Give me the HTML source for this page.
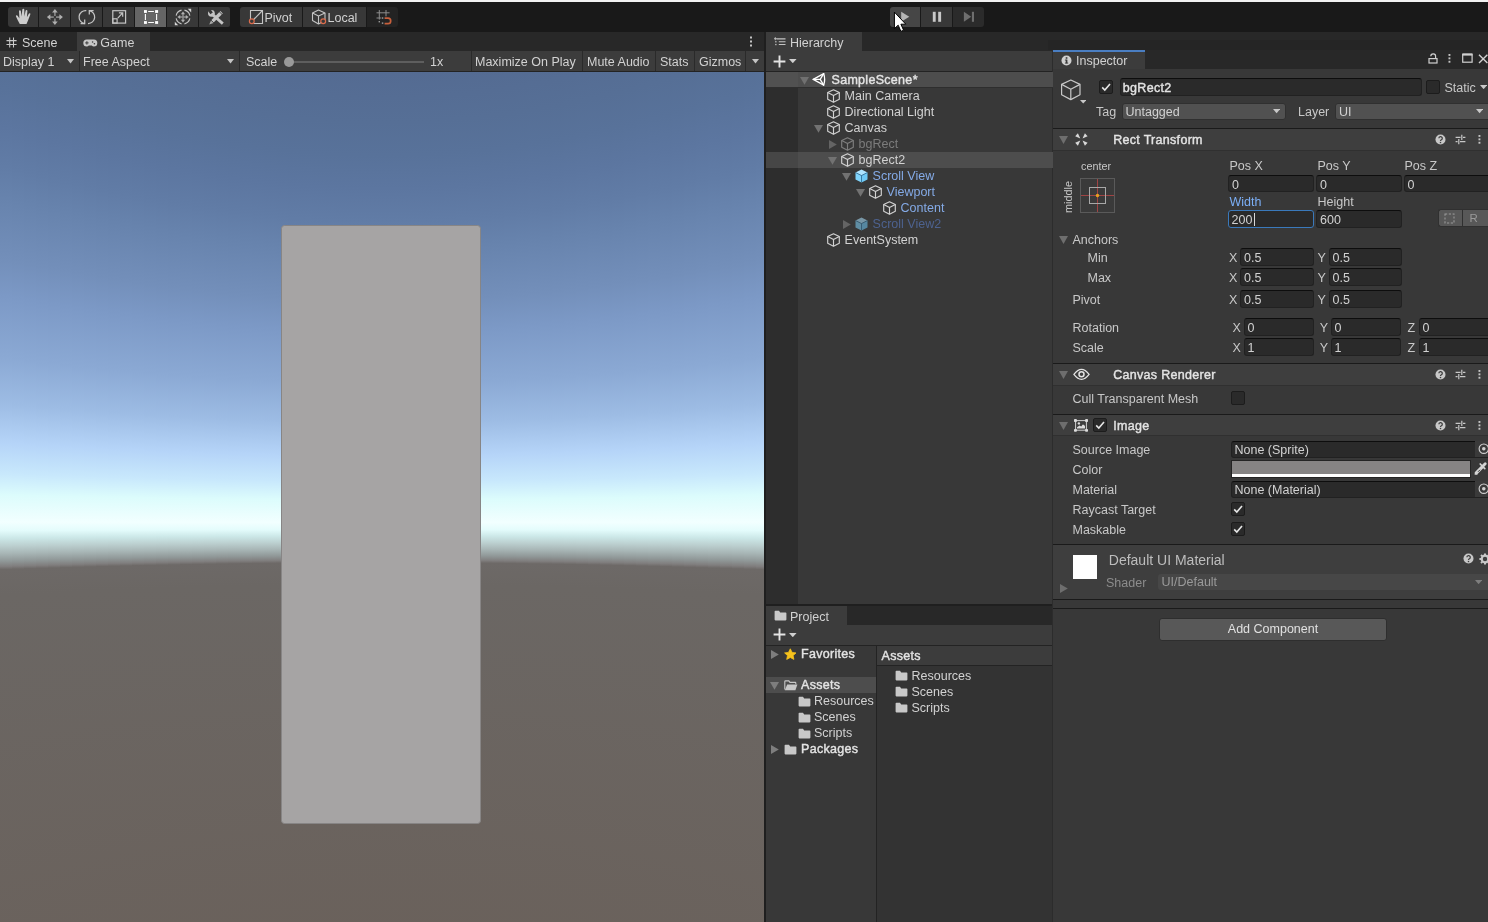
<!DOCTYPE html><html><head><meta charset="utf-8"><title>Unity</title><style>
html,body{margin:0;padding:0;}
body{width:1488px;height:922px;overflow:hidden;background:#383838;position:relative;font-family:"Liberation Sans",sans-serif;font-size:12px;color:#d2d2d2;}
div,svg{position:absolute;box-sizing:border-box;}
.t{white-space:nowrap;will-change:opacity;}
</style></head><body><div style="left:0px;top:0px;width:1488px;height:2px;background:#f2f2f2;"></div>
<div style="left:0px;top:2px;width:1488px;height:30px;background:#191919;"></div>
<div style="left:0px;top:32px;width:1488px;height:19px;background:#282828;"></div>
<div style="left:77px;top:32px;width:73px;height:19px;background:#3c3c3c;"></div>
<div style="left:0px;top:51px;width:764px;height:21px;background:#3c3c3c;border-bottom:1px solid #232323;"></div>
<svg style="left:0;top:72px" width="764" height="850" viewBox="0 0 764 850" shape-rendering="crispEdges"><defs><linearGradient id="gb" gradientUnits="userSpaceOnUse" x1="0" x2="0" y1="-147.5" y2="1052.5"><stop offset="0.0333" stop-color="#52688e"/><stop offset="0.1233" stop-color="#546b92"/><stop offset="0.1650" stop-color="#566f96"/><stop offset="0.1925" stop-color="#58729a"/><stop offset="0.2200" stop-color="#5c76a0"/><stop offset="0.2475" stop-color="#617ca6"/><stop offset="0.2700" stop-color="#6783ad"/><stop offset="0.3133" stop-color="#738fba"/><stop offset="0.3392" stop-color="#7c99c6"/><stop offset="0.3825" stop-color="#8ba9d4"/><stop offset="0.4150" stop-color="#9dbce4"/><stop offset="0.4425" stop-color="#b5d4f8"/><stop offset="0.4642" stop-color="#c8e8fc"/><stop offset="0.4792" stop-color="#dcfcfc"/><stop offset="0.4983" stop-color="#f2ffff"/><stop offset="0.5042" stop-color="#e4fcfc"/><stop offset="0.5096" stop-color="#cce8e8"/><stop offset="0.5150" stop-color="#bcd0d0"/><stop offset="0.5204" stop-color="#a8b6b6"/><stop offset="0.5258" stop-color="#909898"/><stop offset="0.5296" stop-color="#807e7e"/><stop offset="0.5317" stop-color="#6d6967"/><stop offset="0.5500" stop-color="#6b6764"/><stop offset="0.8500" stop-color="#6a615b"/></linearGradient></defs><rect x="0" y="-300" width="13" height="1450" fill="url(#gb)" transform="matrix(1 0 0 1.1801 0 -81.510)"/><rect x="12" y="-300" width="13" height="1450" fill="url(#gb)" transform="matrix(1 0 0 1.1696 0 -76.760)"/><rect x="24" y="-300" width="13" height="1450" fill="url(#gb)" transform="matrix(1 0 0 1.1594 0 -72.123)"/><rect x="36" y="-300" width="13" height="1450" fill="url(#gb)" transform="matrix(1 0 0 1.1494 0 -67.602)"/><rect x="48" y="-300" width="13" height="1450" fill="url(#gb)" transform="matrix(1 0 0 1.1397 0 -63.200)"/><rect x="60" y="-300" width="13" height="1450" fill="url(#gb)" transform="matrix(1 0 0 1.1302 0 -58.921)"/><rect x="72" y="-300" width="13" height="1450" fill="url(#gb)" transform="matrix(1 0 0 1.1210 0 -54.767)"/><rect x="84" y="-300" width="13" height="1450" fill="url(#gb)" transform="matrix(1 0 0 1.1121 0 -50.741)"/><rect x="96" y="-300" width="13" height="1450" fill="url(#gb)" transform="matrix(1 0 0 1.1035 0 -46.847)"/><rect x="108" y="-300" width="13" height="1450" fill="url(#gb)" transform="matrix(1 0 0 1.0952 0 -43.088)"/><rect x="120" y="-300" width="13" height="1450" fill="url(#gb)" transform="matrix(1 0 0 1.0872 0 -39.466)"/><rect x="132" y="-300" width="13" height="1450" fill="url(#gb)" transform="matrix(1 0 0 1.0795 0 -35.986)"/><rect x="144" y="-300" width="13" height="1450" fill="url(#gb)" transform="matrix(1 0 0 1.0722 0 -32.649)"/><rect x="156" y="-300" width="13" height="1450" fill="url(#gb)" transform="matrix(1 0 0 1.0651 0 -29.459)"/><rect x="168" y="-300" width="13" height="1450" fill="url(#gb)" transform="matrix(1 0 0 1.0584 0 -26.419)"/><rect x="180" y="-300" width="13" height="1450" fill="url(#gb)" transform="matrix(1 0 0 1.0520 0 -23.532)"/><rect x="192" y="-300" width="13" height="1450" fill="url(#gb)" transform="matrix(1 0 0 1.0460 0 -20.800)"/><rect x="204" y="-300" width="13" height="1450" fill="url(#gb)" transform="matrix(1 0 0 1.0403 0 -18.226)"/><rect x="216" y="-300" width="13" height="1450" fill="url(#gb)" transform="matrix(1 0 0 1.0349 0 -15.813)"/><rect x="228" y="-300" width="13" height="1450" fill="url(#gb)" transform="matrix(1 0 0 1.0300 0 -13.563)"/><rect x="240" y="-300" width="13" height="1450" fill="url(#gb)" transform="matrix(1 0 0 1.0254 0 -11.479)"/><rect x="252" y="-300" width="13" height="1450" fill="url(#gb)" transform="matrix(1 0 0 1.0211 0 -9.562)"/><rect x="264" y="-300" width="13" height="1450" fill="url(#gb)" transform="matrix(1 0 0 1.0173 0 -7.816)"/><rect x="276" y="-300" width="13" height="1450" fill="url(#gb)" transform="matrix(1 0 0 1.0138 0 -6.242)"/><rect x="288" y="-300" width="13" height="1450" fill="url(#gb)" transform="matrix(1 0 0 1.0107 0 -4.841)"/><rect x="300" y="-300" width="13" height="1450" fill="url(#gb)" transform="matrix(1 0 0 1.0080 0 -3.616)"/><rect x="312" y="-300" width="13" height="1450" fill="url(#gb)" transform="matrix(1 0 0 1.0057 0 -2.567)"/><rect x="324" y="-300" width="13" height="1450" fill="url(#gb)" transform="matrix(1 0 0 1.0037 0 -1.696)"/><rect x="336" y="-300" width="13" height="1450" fill="url(#gb)" transform="matrix(1 0 0 1.0022 0 -1.004)"/><rect x="348" y="-300" width="13" height="1450" fill="url(#gb)" transform="matrix(1 0 0 1.0011 0 -0.492)"/><rect x="360" y="-300" width="13" height="1450" fill="url(#gb)" transform="matrix(1 0 0 1.0004 0 -0.161)"/><rect x="372" y="-300" width="13" height="1450" fill="url(#gb)" transform="matrix(1 0 0 1.0000 0 -0.010)"/><rect x="384" y="-300" width="13" height="1450" fill="url(#gb)" transform="matrix(1 0 0 1.0001 0 -0.040)"/><rect x="396" y="-300" width="13" height="1450" fill="url(#gb)" transform="matrix(1 0 0 1.0006 0 -0.251)"/><rect x="408" y="-300" width="13" height="1450" fill="url(#gb)" transform="matrix(1 0 0 1.0014 0 -0.643)"/><rect x="420" y="-300" width="13" height="1450" fill="url(#gb)" transform="matrix(1 0 0 1.0027 0 -1.215)"/><rect x="432" y="-300" width="13" height="1450" fill="url(#gb)" transform="matrix(1 0 0 1.0043 0 -1.967)"/><rect x="444" y="-300" width="13" height="1450" fill="url(#gb)" transform="matrix(1 0 0 1.0064 0 -2.897)"/><rect x="456" y="-300" width="13" height="1450" fill="url(#gb)" transform="matrix(1 0 0 1.0088 0 -4.005)"/><rect x="468" y="-300" width="13" height="1450" fill="url(#gb)" transform="matrix(1 0 0 1.0117 0 -5.288)"/><rect x="480" y="-300" width="13" height="1450" fill="url(#gb)" transform="matrix(1 0 0 1.0149 0 -6.747)"/><rect x="492" y="-300" width="13" height="1450" fill="url(#gb)" transform="matrix(1 0 0 1.0185 0 -8.379)"/><rect x="504" y="-300" width="13" height="1450" fill="url(#gb)" transform="matrix(1 0 0 1.0225 0 -10.182)"/><rect x="516" y="-300" width="13" height="1450" fill="url(#gb)" transform="matrix(1 0 0 1.0269 0 -12.155)"/><rect x="528" y="-300" width="13" height="1450" fill="url(#gb)" transform="matrix(1 0 0 1.0316 0 -14.294)"/><rect x="540" y="-300" width="13" height="1450" fill="url(#gb)" transform="matrix(1 0 0 1.0367 0 -16.599)"/><rect x="552" y="-300" width="13" height="1450" fill="url(#gb)" transform="matrix(1 0 0 1.0421 0 -19.066)"/><rect x="564" y="-300" width="13" height="1450" fill="url(#gb)" transform="matrix(1 0 0 1.0479 0 -21.693)"/><rect x="576" y="-300" width="13" height="1450" fill="url(#gb)" transform="matrix(1 0 0 1.0541 0 -24.477)"/><rect x="588" y="-300" width="13" height="1450" fill="url(#gb)" transform="matrix(1 0 0 1.0606 0 -27.416)"/><rect x="600" y="-300" width="13" height="1450" fill="url(#gb)" transform="matrix(1 0 0 1.0674 0 -30.506)"/><rect x="612" y="-300" width="13" height="1450" fill="url(#gb)" transform="matrix(1 0 0 1.0746 0 -33.745)"/><rect x="624" y="-300" width="13" height="1450" fill="url(#gb)" transform="matrix(1 0 0 1.0821 0 -37.130)"/><rect x="636" y="-300" width="13" height="1450" fill="url(#gb)" transform="matrix(1 0 0 1.0899 0 -40.658)"/><rect x="648" y="-300" width="13" height="1450" fill="url(#gb)" transform="matrix(1 0 0 1.0980 0 -44.326)"/><rect x="660" y="-300" width="13" height="1450" fill="url(#gb)" transform="matrix(1 0 0 1.1064 0 -48.130)"/><rect x="672" y="-300" width="13" height="1450" fill="url(#gb)" transform="matrix(1 0 0 1.1151 0 -52.068)"/><rect x="684" y="-300" width="13" height="1450" fill="url(#gb)" transform="matrix(1 0 0 1.1241 0 -56.137)"/><rect x="696" y="-300" width="13" height="1450" fill="url(#gb)" transform="matrix(1 0 0 1.1333 0 -60.333)"/><rect x="708" y="-300" width="13" height="1450" fill="url(#gb)" transform="matrix(1 0 0 1.1429 0 -64.654)"/><rect x="720" y="-300" width="13" height="1450" fill="url(#gb)" transform="matrix(1 0 0 1.1527 0 -69.096)"/><rect x="732" y="-300" width="13" height="1450" fill="url(#gb)" transform="matrix(1 0 0 1.1628 0 -73.655)"/><rect x="744" y="-300" width="13" height="1450" fill="url(#gb)" transform="matrix(1 0 0 1.1731 0 -78.330)"/><rect x="756" y="-300" width="13" height="1450" fill="url(#gb)" transform="matrix(1 0 0 1.1837 0 -83.118)"/><rect x="281.5" y="153.5" width="199" height="598" rx="3" ry="3" fill="#a6a4a4" stroke="#878585" stroke-width="1" shape-rendering="auto"/></svg>
<div style="left:764px;top:32px;width:2px;height:890px;background:#1f1f1f;"></div>
<div style="left:766px;top:32px;width:96px;height:19px;background:#3c3c3c;"></div>
<div style="left:766px;top:51px;width:287px;height:21px;background:#3c3c3c;border-bottom:1px solid #232323;"></div>
<div style="left:766px;top:72px;width:32px;height:532px;background:#2d2d2d;"></div>
<div style="left:798px;top:72px;width:255px;height:532px;background:#383838;"></div>
<div style="left:766px;top:604px;width:287px;height:2px;background:#1f1f1f;"></div>
<div style="left:766px;top:606px;width:287px;height:18.5px;background:#282828;"></div>
<div style="left:766px;top:606px;width:81px;height:18.5px;background:#3c3c3c;"></div>
<div style="left:766px;top:624.5px;width:287px;height:21.5px;background:#3c3c3c;border-bottom:1px solid #232323;"></div>
<div style="left:766px;top:646px;width:110px;height:276px;background:#383838;"></div>
<div style="left:876px;top:646px;width:1px;height:276px;background:#232323;"></div>
<div style="left:877px;top:646px;width:176px;height:20px;background:#3c3c3c;border-bottom:1px solid #232323;"></div>
<div style="left:877px;top:666px;width:176px;height:256px;background:#333333;"></div>
<div style="left:1048px;top:40px;width:440px;height:10px;background:#252525;"></div>
<div style="left:1052px;top:50px;width:1px;height:872px;background:#2c2c2c;"></div>
<div style="left:1053px;top:50px;width:435px;height:19px;background:#282828;"></div>
<div style="left:1053px;top:50px;width:92px;height:19px;background:#3c3c3c;border-top:2px solid #4a7ec2;"></div>
<div style="left:1053px;top:69px;width:435px;height:853px;background:#383838;"></div>
<div style="left:8px;top:7px;width:30px;height:20px;background:#383838;border-radius:3px 0 0 3px;"></div>
<div style="left:39px;top:7px;width:31px;height:20px;background:#383838;"></div>
<div style="left:71px;top:7px;width:31px;height:20px;background:#383838;"></div>
<div style="left:103px;top:7px;width:31px;height:20px;background:#383838;"></div>
<div style="left:135px;top:7px;width:31px;height:20px;background:#656565;"></div>
<div style="left:167px;top:7px;width:31px;height:20px;background:#383838;"></div>
<div style="left:199px;top:7px;width:31px;height:20px;background:#383838;border-radius:0 2px 2px 0;"></div>
<svg style="left:8px;top:7px;" width="30" height="20" viewBox="0 0 30 20"><path d="M11.8 17L9.9 13.5L8 9.6Q7.6 8.4 8.5 8.2Q9.3 8.1 9.8 9L11.4 11.6L11 4.2Q11 3.2 11.9 3.2Q12.8 3.2 12.9 4.2L13.6 9.5L14.3 2.8Q14.4 1.8 15.4 1.8Q16.3 1.8 16.3 2.8L16.4 9.5L17.6 3.8Q17.8 2.9 18.7 3Q19.6 3.2 19.4 4.2L18.9 10.2L20.8 6.8Q21.3 6 22 6.3Q22.6 6.7 22.3 7.6L20 13.5L18.5 17Z" fill="#cdcdcd"/></svg>
<svg style="left:39px;top:7px;" width="31" height="20" viewBox="0 0 31 20"><g fill="none" stroke="#858585" stroke-width="1.7"><path d="M15.9 5V9M15.9 11.4V15.2M10.8 10.1H14.8M17 10.1H21"/></g><g fill="#b0b0b0"><path d="M15.9 2L18.7 5.6H13.1Z"/><path d="M15.9 18L18.7 14.6H13.1Z"/><path d="M7.9 10.1L11.4 7.3V12.9Z"/><path d="M23.9 10.1L20.4 7.3V12.9Z"/></g></svg>
<svg style="left:71px;top:7px;" width="31" height="20" viewBox="0 0 31 20"><g fill="none" stroke="#c4c4c4" stroke-width="1.25"><path d="M13.7 16.6A6.5 6.5 0 0 1 15.3 3.7"/><path d="M18.3 3.6A6.5 6.5 0 0 1 17 16.5"/><path d="M9.6 16.6H13.7V12.6"/><path d="M22.6 3.6H18.3V7.6"/></g></svg>
<svg style="left:103px;top:7px;" width="31" height="20" viewBox="0 0 31 20"><g fill="none" stroke="#c4c4c4" stroke-width="1.2"><rect x="9.8" y="3.7" width="12.8" height="12.4"/><rect x="9.8" y="11.8" width="4.3" height="4.3"/><path d="M14.8 11.2L19.4 6.2M15.9 5.9H19.7V9.8"/></g></svg>
<svg style="left:135px;top:7px;" width="31" height="20" viewBox="0 0 31 20"><g fill="none" stroke="#ffffff" stroke-width="1.1"><path d="M13.2 4.5H18.9M13.2 15.5H18.9M10.4 6.9V13M21.6 6.9V13"/></g><g fill="#ffffff"><rect x="9" y="3.1" width="2.9" height="2.8"/><rect x="20.1" y="3.1" width="3" height="2.8"/><rect x="9" y="14.1" width="2.9" height="2.8"/><rect x="20.1" y="14.1" width="3" height="2.8"/></g></svg>
<svg style="left:167px;top:7px;" width="31" height="20" viewBox="0 0 31 20"><g fill="none" stroke="#c4c4c4" stroke-width="1.15"><path d="M22.85 11.46A7 7 0 0 1 17.46 16.85"/><path d="M14.54 16.85A7 7 0 0 1 9.15 11.46"/><path d="M9.15 8.54A7 7 0 0 1 14.54 3.15"/><path d="M17.46 3.15A7 7 0 0 1 22.85 8.54"/></g><g stroke="#8e8e8e" stroke-width="1.5" fill="none"><path d="M16 6.6V13.4M12.6 10H19.4"/></g><g fill="#b0b0b0"><path d="M16 4.4L18.1 7.2H13.9Z"/><path d="M16 15.6L18.1 12.8H13.9Z"/><path d="M10.4 10L13.2 7.9V12.1Z"/><path d="M21.6 10L18.8 7.9V12.1Z"/></g><g fill="#d8d8d8"><path d="M24.2 1.8V5.4L20.8 1.8Z"/><path d="M7.8 18.2V14.8L11.2 18.2Z"/></g></svg>
<svg style="left:199px;top:7px;" width="31" height="20" viewBox="0 0 31 20"><path d="M13.6 7.6L23.8 16.6" stroke="#c4c4c4" stroke-width="2.8" fill="none"/><circle cx="12.4" cy="6.3" r="3.4" fill="#c4c4c4"/><path d="M12.6 6.4L9.6 2.2" stroke="#383838" stroke-width="3"/><path d="M22.6 5.2L13.4 14.4" stroke="#c4c4c4" stroke-width="3.4" fill="none"/><path d="M19.6 4L23.8 8.2" stroke="#383838" stroke-width="0.9"/><path d="M11.6 12.6L15.2 16.2" stroke="#383838" stroke-width="0.8"/><path d="M12 13.4L10.2 17.6L14.6 16Z" fill="#a8a8a8"/></svg>
<div style="left:240px;top:7px;width:62px;height:20px;background:#383838;border-radius:3px 0 0 3px;"></div>
<div style="left:303px;top:7px;width:63px;height:20px;background:#383838;"></div>
<div style="left:367px;top:7px;width:31px;height:20px;background:#232323;border-radius:0 3px 3px 0;"></div>
<svg style="left:240px;top:7px;" width="62" height="20" viewBox="0 0 62 20"><g fill="none" stroke="#c4c4c4" stroke-width="1.1"><path d="M10.5 12V3.5H22.5V16.5H13.5"/><path d="M13.2 13L22 4"/></g><circle cx="11.8" cy="14.2" r="2.4" fill="#383838" stroke="#dc6c4c" stroke-width="1.2"/></svg>
<div class="t" style="left:264.5px;top:10px;height:16px;line-height:16px;font-size:12.5px;color:#d2d2d2;font-weight:normal;">Pivot</div>
<svg style="left:303px;top:7px;" width="63" height="20" viewBox="0 0 63 20"><g fill="none" stroke="#c4c4c4" stroke-width="1.1" stroke-linejoin="round"><path d="M15.5 3L22 6V13.5L15.5 17L9.5 13.5V6Z"/><path d="M9.5 6L15.5 9L22 6M15.5 9V17"/></g><circle cx="20.2" cy="14.2" r="2.4" fill="#383838" stroke="#dc6c4c" stroke-width="1.2"/></svg>
<div class="t" style="left:327.5px;top:10px;height:16px;line-height:16px;font-size:12.5px;color:#d2d2d2;font-weight:normal;">Local</div>
<svg style="left:367px;top:7px;" width="31" height="20" viewBox="0 0 31 20"><g fill="none" stroke="#8c8c8c" stroke-width="1"><path d="M12.3 3V12.6M19 3V9.4M9.5 5.8H22.6M9.5 11H14.2"/></g><g fill="#9a9a9a"><rect x="11.6" y="14" width="1.4" height="1.4"/><rect x="14.8" y="10.3" width="1.5" height="1.5"/><rect x="14.8" y="15.4" width="1.5" height="1.5"/></g><path d="M17.6 11.2H21A2.7 2.7 0 0 1 21 16.6H17.6" fill="none" stroke="#c8603c" stroke-width="1.7"/></svg>
<div style="left:890px;top:7px;width:30px;height:20px;background:#464646;border-radius:3px 0 0 3px;"></div>
<div style="left:921px;top:7px;width:31px;height:20px;background:#383838;"></div>
<div style="left:953px;top:7px;width:31px;height:20px;background:#2b2b2b;border-radius:0 3px 3px 0;"></div>
<svg style="left:890px;top:7px;" width="30" height="20" viewBox="0 0 30 20"><path d="M11.2 4.7L19.3 9.8L11.2 14.8Z" fill="#b4b4b4"/></svg>
<svg style="left:921px;top:7px;" width="31" height="20" viewBox="0 0 31 20"><rect x="11.8" y="4.8" width="2.9" height="10" fill="#c8c8c8"/><rect x="17.2" y="4.8" width="2.9" height="10" fill="#c8c8c8"/></svg>
<svg style="left:953px;top:7px;" width="31" height="20" viewBox="0 0 31 20"><path d="M10.9 4.8L18.2 9.8L10.9 14.8Z" fill="#6e6e6e"/><rect x="18.9" y="4.8" width="2.1" height="10" fill="#6e6e6e"/></svg>
<svg style="left:6px;top:37px;" width="11" height="11" viewBox="0 0 11 11"><g stroke="#c8c8c8" stroke-width="1.05" fill="none"><path d="M3.7 0.5V10.5M7.5 0.5V10.5M0.5 3.6H10.6M0.5 7.4H10.6"/></g></svg>
<div class="t" style="left:22px;top:35px;height:16px;line-height:16px;font-size:12.5px;color:#d2d2d2;font-weight:normal;">Scene</div>
<svg style="left:83px;top:39px;" width="15" height="8" viewBox="0 0 15 8"><path d="M3.8 0.4H10.8A3.5 3.5 0 0 1 10.8 7.4Q9.6 7.4 8.8 6.4H5.8Q5 7.4 3.8 7.4A3.5 3.5 0 0 1 3.8 0.4Z" fill="#c8c8c8"/><path d="M3.9 2.2V5.6M2.2 3.9H5.6" stroke="#3c3c3c" stroke-width="1"/><circle cx="9.6" cy="3" r="0.8" fill="#3c3c3c"/><circle cx="11.4" cy="4.8" r="0.8" fill="#3c3c3c"/></svg>
<div class="t" style="left:100.3px;top:35px;height:16px;line-height:16px;font-size:12.5px;color:#d2d2d2;font-weight:normal;">Game</div>
<svg style="left:748px;top:36px;" width="6" height="12" viewBox="0 0 6 12"><g fill="#c4c4c4"><rect x="2" y="0.5" width="2" height="2"/><rect x="2" y="4.5" width="2" height="2"/><rect x="2" y="8.5" width="2" height="2"/></g></svg>
<div class="t" style="left:3px;top:54px;height:16px;line-height:16px;font-size:12.5px;color:#d2d2d2;font-weight:normal;">Display 1</div>
<svg style="left:67.0px;top:59.25px;" width="7" height="4.5" viewBox="0 0 7 4.5"><path d="M0 0H7L3.5 4.5Z" fill="#c4c4c4"/></svg>
<div style="left:79px;top:51px;width:1px;height:20px;background:#2a2a2a;"></div>
<div class="t" style="left:83px;top:54px;height:16px;line-height:16px;font-size:12.5px;color:#d2d2d2;font-weight:normal;">Free Aspect</div>
<svg style="left:227.0px;top:59.25px;" width="7" height="4.5" viewBox="0 0 7 4.5"><path d="M0 0H7L3.5 4.5Z" fill="#c4c4c4"/></svg>
<div style="left:239px;top:51px;width:1px;height:20px;background:#2a2a2a;"></div>
<div class="t" style="left:246px;top:54px;height:16px;line-height:16px;font-size:12.5px;color:#d2d2d2;font-weight:normal;">Scale</div>
<div style="left:289px;top:61px;width:135px;height:2px;background:#5e5e5e;"></div>
<div style="left:284px;top:57px;width:10px;height:10px;background:#999999;border-radius:5px;"></div>
<div class="t" style="left:430px;top:54px;height:16px;line-height:16px;font-size:12.5px;color:#d2d2d2;font-weight:normal;">1x</div>
<div style="left:471px;top:51px;width:1px;height:20px;background:#2a2a2a;"></div>
<div class="t" style="left:475px;top:54px;height:16px;line-height:16px;font-size:12.5px;color:#d2d2d2;font-weight:normal;">Maximize On Play</div>
<div style="left:582px;top:51px;width:1px;height:20px;background:#2a2a2a;"></div>
<div class="t" style="left:587px;top:54px;height:16px;line-height:16px;font-size:12.5px;color:#d2d2d2;font-weight:normal;">Mute Audio</div>
<div style="left:655px;top:51px;width:1px;height:20px;background:#2a2a2a;"></div>
<div class="t" style="left:660px;top:54px;height:16px;line-height:16px;font-size:12.5px;color:#d2d2d2;font-weight:normal;">Stats</div>
<div style="left:694px;top:51px;width:1px;height:20px;background:#2a2a2a;"></div>
<div class="t" style="left:699px;top:54px;height:16px;line-height:16px;font-size:12.5px;color:#d2d2d2;font-weight:normal;">Gizmos</div>
<div style="left:745px;top:51px;width:1px;height:20px;background:#2a2a2a;"></div>
<svg style="left:751.5px;top:59.25px;" width="7" height="4.5" viewBox="0 0 7 4.5"><path d="M0 0H7L3.5 4.5Z" fill="#c4c4c4"/></svg>
<svg style="left:774px;top:36px;" width="13" height="12" viewBox="0 0 13 12"><g stroke="#c4c4c4" stroke-width="1.1" fill="none"><path d="M2.5 2.9H11.5M4.8 5.7H11.5M4.8 8.5H11.5"/><path d="M1.3 1.2V4.2M0 2.7H2.8" stroke-width="0.9"/></g><g fill="#c4c4c4"><rect x="1.2" y="5.1" width="1.3" height="1.3"/><rect x="1.2" y="7.9" width="1.3" height="1.3"/></g></svg>
<div class="t" style="left:790px;top:35px;height:16px;line-height:16px;font-size:12.5px;color:#d2d2d2;font-weight:normal;">Hierarchy</div>
<svg style="left:772.5px;top:54.5px;" width="13" height="13" viewBox="0 0 13 13"><path d="M6.5 0.6V12.4M0.6 6.5H12.4" stroke="#e4e4e4" stroke-width="1.9" fill="none"/></svg>
<svg style="left:789.0px;top:58.9px;" width="7.6" height="4.2" viewBox="0 0 7.6 4.2"><path d="M0 0H7.6L3.8 4.2Z" fill="#d0d0d0"/></svg>
<div style="left:766px;top:72px;width:32px;height:15px;background:#515151;"></div>
<div style="left:798px;top:72px;width:255px;height:15px;background:#4d4d4d;"></div>
<div style="left:766px;top:87px;width:287px;height:1px;background:#2e2e2e;"></div>
<div style="left:766px;top:152px;width:32px;height:16px;background:#464646;"></div>
<div style="left:798px;top:152px;width:255px;height:16px;background:#4d4d4d;"></div>
<svg style="left:799.9px;top:77.0px;" width="9" height="8" viewBox="0 0 9 8"><path d="M0 0H9L4.5 7.8Z" fill="#707070"/></svg>
<svg style="left:812px;top:72px;" width="14" height="15" viewBox="0 0 14 15"><g fill="none" stroke="#ffffff" stroke-width="1.3" stroke-linejoin="round" stroke-linecap="round"><path d="M1.2 7.4L11.7 1.6Q13.6 7.4 11.7 13.1Z"/><path d="M1.2 7.4H8.2M8.2 7.4L11.7 1.6M8.2 7.4L11.7 13.1"/></g></svg>
<div class="t" style="left:831.5px;top:72px;height:16px;line-height:16px;font-size:12.5px;color:#e4e4e4;font-weight:normal;-webkit-text-stroke:0.4px #e4e4e4;letter-spacing:0.3px;">SampleScene*</div>
<svg style="left:827px;top:89px;" width="13" height="14" viewBox="0 0 13 14"><g fill="none" stroke="#d2d2d2" stroke-width="1.15" stroke-linejoin="round" opacity="1"><path d="M6.5 0.8L12.3 3.6V10.3L6.5 13.2L0.7 10.3V3.6Z"/><path d="M0.7 3.6L6.5 6.6L12.3 3.6M6.5 6.6V13.2"/></g></svg>
<div class="t" style="left:844.6px;top:88px;height:16px;line-height:16px;font-size:12.5px;color:#d2d2d2;font-weight:normal;">Main Camera</div>
<svg style="left:827px;top:105px;" width="13" height="14" viewBox="0 0 13 14"><g fill="none" stroke="#d2d2d2" stroke-width="1.15" stroke-linejoin="round" opacity="1"><path d="M6.5 0.8L12.3 3.6V10.3L6.5 13.2L0.7 10.3V3.6Z"/><path d="M0.7 3.6L6.5 6.6L12.3 3.6M6.5 6.6V13.2"/></g></svg>
<div class="t" style="left:844.6px;top:104px;height:16px;line-height:16px;font-size:12.5px;color:#d2d2d2;font-weight:normal;">Directional Light</div>
<svg style="left:827px;top:121px;" width="13" height="14" viewBox="0 0 13 14"><g fill="none" stroke="#d2d2d2" stroke-width="1.15" stroke-linejoin="round" opacity="1"><path d="M6.5 0.8L12.3 3.6V10.3L6.5 13.2L0.7 10.3V3.6Z"/><path d="M0.7 3.6L6.5 6.6L12.3 3.6M6.5 6.6V13.2"/></g></svg>
<div class="t" style="left:844.6px;top:120px;height:16px;line-height:16px;font-size:12.5px;color:#d2d2d2;font-weight:normal;">Canvas</div>
<svg style="left:814.3px;top:124.5px;" width="9" height="8" viewBox="0 0 9 8"><path d="M0 0H9L4.5 7.8Z" fill="#727272"/></svg>
<svg style="left:841px;top:137px;" width="13" height="14" viewBox="0 0 13 14"><g fill="none" stroke="#d2d2d2" stroke-width="1.15" stroke-linejoin="round" opacity="0.45"><path d="M6.5 0.8L12.3 3.6V10.3L6.5 13.2L0.7 10.3V3.6Z"/><path d="M0.7 3.6L6.5 6.6L12.3 3.6M6.5 6.6V13.2"/></g></svg>
<div class="t" style="left:858.6px;top:136px;height:16px;line-height:16px;font-size:12.5px;color:#7c7c7c;font-weight:normal;">bgRect</div>
<svg style="left:828.8px;top:139.9px;" width="8" height="9" viewBox="0 0 8 9"><path d="M0 0V9L7.8 4.5Z" fill="#646464"/></svg>
<svg style="left:841px;top:153px;" width="13" height="14" viewBox="0 0 13 14"><g fill="none" stroke="#d2d2d2" stroke-width="1.15" stroke-linejoin="round" opacity="1"><path d="M6.5 0.8L12.3 3.6V10.3L6.5 13.2L0.7 10.3V3.6Z"/><path d="M0.7 3.6L6.5 6.6L12.3 3.6M6.5 6.6V13.2"/></g></svg>
<div class="t" style="left:858.6px;top:152px;height:16px;line-height:16px;font-size:12.5px;color:#d2d2d2;font-weight:normal;">bgRect2</div>
<svg style="left:828.3px;top:156.5px;" width="9" height="8" viewBox="0 0 9 8"><path d="M0 0H9L4.5 7.8Z" fill="#727272"/></svg>
<svg style="left:855px;top:169px;" width="13" height="14" viewBox="0 0 13 14"><g opacity="1"><path d="M6.5 0.6L12.5 3.5L6.5 6.6L0.5 3.5Z" fill="#aee4ff"/><path d="M0.5 3.5L6.5 6.6V13.4L0.5 10.4Z" fill="#7fd4fc"/><path d="M12.5 3.5L6.5 6.6V13.4L12.5 10.4Z" fill="#6fc9f6"/><path d="M0.9 3.7L6.5 6.6L12.1 3.7M6.5 6.6V13" fill="none" stroke="#2f6f99" stroke-width="0.8"/></g></svg>
<div class="t" style="left:872.6px;top:168px;height:16px;line-height:16px;font-size:12.5px;color:#84aae6;font-weight:normal;">Scroll View</div>
<svg style="left:842.3px;top:172.5px;" width="9" height="8" viewBox="0 0 9 8"><path d="M0 0H9L4.5 7.8Z" fill="#727272"/></svg>
<svg style="left:869px;top:185px;" width="13" height="14" viewBox="0 0 13 14"><g fill="none" stroke="#d2d2d2" stroke-width="1.15" stroke-linejoin="round" opacity="1"><path d="M6.5 0.8L12.3 3.6V10.3L6.5 13.2L0.7 10.3V3.6Z"/><path d="M0.7 3.6L6.5 6.6L12.3 3.6M6.5 6.6V13.2"/></g></svg>
<div class="t" style="left:886.6px;top:184px;height:16px;line-height:16px;font-size:12.5px;color:#84aae6;font-weight:normal;">Viewport</div>
<svg style="left:856.3px;top:188.5px;" width="9" height="8" viewBox="0 0 9 8"><path d="M0 0H9L4.5 7.8Z" fill="#727272"/></svg>
<svg style="left:883px;top:201px;" width="13" height="14" viewBox="0 0 13 14"><g fill="none" stroke="#d2d2d2" stroke-width="1.15" stroke-linejoin="round" opacity="1"><path d="M6.5 0.8L12.3 3.6V10.3L6.5 13.2L0.7 10.3V3.6Z"/><path d="M0.7 3.6L6.5 6.6L12.3 3.6M6.5 6.6V13.2"/></g></svg>
<div class="t" style="left:900.6px;top:200px;height:16px;line-height:16px;font-size:12.5px;color:#84aae6;font-weight:normal;">Content</div>
<svg style="left:855px;top:217px;" width="13" height="14" viewBox="0 0 13 14"><g opacity="0.55"><path d="M6.5 0.6L12.5 3.5L6.5 6.6L0.5 3.5Z" fill="#aee4ff"/><path d="M0.5 3.5L6.5 6.6V13.4L0.5 10.4Z" fill="#7fd4fc"/><path d="M12.5 3.5L6.5 6.6V13.4L12.5 10.4Z" fill="#6fc9f6"/><path d="M0.9 3.7L6.5 6.6L12.1 3.7M6.5 6.6V13" fill="none" stroke="#2f6f99" stroke-width="0.8"/></g></svg>
<div class="t" style="left:872.6px;top:216px;height:16px;line-height:16px;font-size:12.5px;color:#4d628f;font-weight:normal;">Scroll View2</div>
<svg style="left:842.8px;top:219.9px;" width="8" height="9" viewBox="0 0 8 9"><path d="M0 0V9L7.8 4.5Z" fill="#646464"/></svg>
<svg style="left:827px;top:233px;" width="13" height="14" viewBox="0 0 13 14"><g fill="none" stroke="#d2d2d2" stroke-width="1.15" stroke-linejoin="round" opacity="1"><path d="M6.5 0.8L12.3 3.6V10.3L6.5 13.2L0.7 10.3V3.6Z"/><path d="M0.7 3.6L6.5 6.6L12.3 3.6M6.5 6.6V13.2"/></g></svg>
<div class="t" style="left:844.6px;top:232px;height:16px;line-height:16px;font-size:12.5px;color:#d2d2d2;font-weight:normal;">EventSystem</div>
<svg style="left:773.6px;top:610.3px;" width="13" height="11" viewBox="0 0 13 11"><path d="M0.6 1.6Q0.6 0.8 1.4 0.8H5L6.2 2.4H11.6Q12.4 2.4 12.4 3.2V9.6Q12.4 10.4 11.6 10.4H1.4Q0.6 10.4 0.6 9.6Z" fill="#c8c8c8"/></svg>
<div class="t" style="left:790px;top:609px;height:16px;line-height:16px;font-size:12.5px;color:#d2d2d2;font-weight:normal;">Project</div>
<svg style="left:772.5px;top:628.0px;" width="13" height="13" viewBox="0 0 13 13"><path d="M6.5 0.6V12.4M0.6 6.5H12.4" stroke="#e4e4e4" stroke-width="1.9" fill="none"/></svg>
<svg style="left:789.0px;top:632.6999999999999px;" width="7.6" height="4.2" viewBox="0 0 7.6 4.2"><path d="M0 0H7.6L3.8 4.2Z" fill="#d0d0d0"/></svg>
<svg style="left:771px;top:649.5px;" width="8" height="9" viewBox="0 0 8 9"><path d="M0 0V9L7.8 4.5Z" fill="#7e7e7e"/></svg>
<svg style="left:783.6px;top:647.6px;" width="13" height="12" viewBox="0 0 13 12"><path d="M6.3 0.8L8.1 4.4L12 4.9L9.1 7.6L9.9 11.4L6.3 9.5L2.7 11.4L3.5 7.6L0.6 4.9L4.5 4.4Z" fill="#f6c21c" stroke="#f6c21c" stroke-width="0.8" stroke-linejoin="round"/></svg>
<div class="t" style="left:801px;top:646px;height:16px;line-height:16px;font-size:12.5px;color:#e4e4e4;font-weight:normal;-webkit-text-stroke:0.4px #e4e4e4;letter-spacing:0.3px;">Favorites</div>
<div style="left:766px;top:677px;width:110px;height:16px;background:#4d4d4d;"></div>
<svg style="left:770.1px;top:681.5px;" width="9" height="8" viewBox="0 0 9 8"><path d="M0 0H9L4.5 7.8Z" fill="#7e7e7e"/></svg>
<svg style="left:784px;top:679.5px;" width="14" height="11" viewBox="0 0 14 11"><path d="M0.8 9.6V1.6Q0.8 0.9 1.5 0.9H4.8L6 2.4H11.2Q11.8 2.4 11.8 3V4.2" fill="none" stroke="#c8c8c8" stroke-width="1.1"/><path d="M3.2 4.6H13.4L11.4 10.2H0.8Z" fill="#c8c8c8"/></svg>
<div class="t" style="left:801px;top:677px;height:16px;line-height:16px;font-size:12.5px;color:#e4e4e4;font-weight:normal;-webkit-text-stroke:0.4px #e4e4e4;letter-spacing:0.3px;">Assets</div>
<svg style="left:797.5px;top:695.5px;" width="13" height="11" viewBox="0 0 13 11"><path d="M0.6 1.6Q0.6 0.8 1.4 0.8H5L6.2 2.4H11.6Q12.4 2.4 12.4 3.2V9.6Q12.4 10.4 11.6 10.4H1.4Q0.6 10.4 0.6 9.6Z" fill="#c8c8c8"/></svg>
<div class="t" style="left:814px;top:693px;height:16px;line-height:16px;font-size:12.5px;color:#d2d2d2;font-weight:normal;">Resources</div>
<svg style="left:797.5px;top:711.5px;" width="13" height="11" viewBox="0 0 13 11"><path d="M0.6 1.6Q0.6 0.8 1.4 0.8H5L6.2 2.4H11.6Q12.4 2.4 12.4 3.2V9.6Q12.4 10.4 11.6 10.4H1.4Q0.6 10.4 0.6 9.6Z" fill="#c8c8c8"/></svg>
<div class="t" style="left:814px;top:709px;height:16px;line-height:16px;font-size:12.5px;color:#d2d2d2;font-weight:normal;">Scenes</div>
<svg style="left:797.5px;top:727.5px;" width="13" height="11" viewBox="0 0 13 11"><path d="M0.6 1.6Q0.6 0.8 1.4 0.8H5L6.2 2.4H11.6Q12.4 2.4 12.4 3.2V9.6Q12.4 10.4 11.6 10.4H1.4Q0.6 10.4 0.6 9.6Z" fill="#c8c8c8"/></svg>
<div class="t" style="left:814px;top:725px;height:16px;line-height:16px;font-size:12.5px;color:#d2d2d2;font-weight:normal;">Scripts</div>
<svg style="left:771px;top:744.5px;" width="8" height="9" viewBox="0 0 8 9"><path d="M0 0V9L7.8 4.5Z" fill="#7e7e7e"/></svg>
<svg style="left:784px;top:743.5px;" width="13" height="11" viewBox="0 0 13 11"><path d="M0.6 1.6Q0.6 0.8 1.4 0.8H5L6.2 2.4H11.6Q12.4 2.4 12.4 3.2V9.6Q12.4 10.4 11.6 10.4H1.4Q0.6 10.4 0.6 9.6Z" fill="#c8c8c8"/></svg>
<div class="t" style="left:801px;top:741px;height:16px;line-height:16px;font-size:12.5px;color:#e4e4e4;font-weight:normal;-webkit-text-stroke:0.4px #e4e4e4;letter-spacing:0.3px;">Packages</div>
<div class="t" style="left:881.5px;top:648px;height:16px;line-height:16px;font-size:12.5px;color:#e4e4e4;font-weight:normal;-webkit-text-stroke:0.4px #e4e4e4;letter-spacing:0.3px;">Assets</div>
<svg style="left:895px;top:670.1px;" width="13" height="11" viewBox="0 0 13 11"><path d="M0.6 1.6Q0.6 0.8 1.4 0.8H5L6.2 2.4H11.6Q12.4 2.4 12.4 3.2V9.6Q12.4 10.4 11.6 10.4H1.4Q0.6 10.4 0.6 9.6Z" fill="#c8c8c8"/></svg>
<div class="t" style="left:911.5px;top:668px;height:16px;line-height:16px;font-size:12.5px;color:#d2d2d2;font-weight:normal;">Resources</div>
<svg style="left:895px;top:686.1px;" width="13" height="11" viewBox="0 0 13 11"><path d="M0.6 1.6Q0.6 0.8 1.4 0.8H5L6.2 2.4H11.6Q12.4 2.4 12.4 3.2V9.6Q12.4 10.4 11.6 10.4H1.4Q0.6 10.4 0.6 9.6Z" fill="#c8c8c8"/></svg>
<div class="t" style="left:911.5px;top:684px;height:16px;line-height:16px;font-size:12.5px;color:#d2d2d2;font-weight:normal;">Scenes</div>
<svg style="left:895px;top:702.1px;" width="13" height="11" viewBox="0 0 13 11"><path d="M0.6 1.6Q0.6 0.8 1.4 0.8H5L6.2 2.4H11.6Q12.4 2.4 12.4 3.2V9.6Q12.4 10.4 11.6 10.4H1.4Q0.6 10.4 0.6 9.6Z" fill="#c8c8c8"/></svg>
<div class="t" style="left:911.5px;top:700px;height:16px;line-height:16px;font-size:12.5px;color:#d2d2d2;font-weight:normal;">Scripts</div>
<svg style="left:1060.5px;top:55px;" width="11" height="11" viewBox="0 0 11 11"><circle cx="5.5" cy="5.5" r="5" fill="#d0d0d0"/><rect x="4.7" y="4.6" width="1.7" height="3.8" fill="#3c3c3c"/><rect x="4.7" y="2.2" width="1.7" height="1.6" fill="#3c3c3c"/><rect x="3.9" y="4.6" width="1.6" height="0.9" fill="#3c3c3c"/><rect x="3.9" y="7.6" width="3.3" height="0.9" fill="#3c3c3c"/></svg>
<div class="t" style="left:1076px;top:53px;height:16px;line-height:16px;font-size:12.5px;color:#d2d2d2;font-weight:normal;">Inspector</div>
<svg style="left:1428px;top:52.5px;" width="10" height="11" viewBox="0 0 10 11"><rect x="1" y="5.6" width="8" height="4.4" fill="none" stroke="#d0d0d0" stroke-width="1.2"/><path d="M7.6 5.4V3.4A2.4 2.4 0 0 0 2.8 3.2" fill="none" stroke="#d0d0d0" stroke-width="1.2"/></svg>
<svg style="left:1447.5px;top:54px;" width="3" height="9" viewBox="0 0 3 9"><g fill="#c4c4c4"><rect x="0.5" y="0" width="1.9" height="1.9"/><rect x="0.5" y="3.4" width="1.9" height="1.9"/><rect x="0.5" y="6.8" width="1.9" height="1.9"/></g></svg>
<svg style="left:1461.5px;top:53px;" width="11" height="10" viewBox="0 0 11 10"><rect x="0.7" y="1.4" width="9.4" height="7.8" fill="none" stroke="#d0d0d0" stroke-width="1.2"/><rect x="0.4" y="0.4" width="10" height="2.2" fill="#d0d0d0"/></svg>
<svg style="left:1478px;top:53.5px;" width="10" height="10" viewBox="0 0 10 10"><path d="M1 0.8L9.4 9M9.4 0.8L1 9" stroke="#d0d0d0" stroke-width="1.4" fill="none"/></svg>
<svg style="left:1060px;top:79px;" width="22" height="23" viewBox="0 0 22 23"><g fill="none" stroke="#c8c8c8" stroke-width="1.2" stroke-linejoin="round"><path d="M10.8 1L20 5.4V15.8L10.8 20.6L1.6 15.8V5.4Z"/><path d="M1.6 5.4L10.8 10.2L20 5.4M10.8 10.2V20.6"/></g></svg>
<svg style="left:1080.0px;top:100.4px;" width="6.4" height="3.6" viewBox="0 0 6.4 3.6"><path d="M0 0H6.4L3.2 3.6Z" fill="#c8c8c8"/></svg>
<div style="left:1099px;top:80px;width:14px;height:14px;background:#2a2a2a;border:1px solid #1c1c1c;border-radius:2px;"></div>
<svg style="left:1099px;top:80px;" width="14" height="14" viewBox="0 0 14 14"><path d="M3.2 7.4L5.8 10L11 4" fill="none" stroke="#e6e6e6" stroke-width="1.6"/></svg>
<div style="left:1120px;top:78px;width:302px;height:18px;background:#2a2a2a;border:1px solid #212121;border-top-color:#0d0d0d;border-radius:3px;"></div>
<div class="t" style="left:1122.8px;top:80px;height:16px;line-height:16px;font-size:12.5px;color:#e4e4e4;font-weight:normal;-webkit-text-stroke:0.4px #e4e4e4;letter-spacing:0.3px;">bgRect2</div>
<div style="left:1426px;top:80px;width:14px;height:14px;background:#2a2a2a;border:1px solid #1c1c1c;border-radius:2px;"></div>
<div class="t" style="left:1444.5px;top:80px;height:16px;line-height:16px;font-size:12.5px;color:#c8c8c8;font-weight:normal;">Static</div>
<svg style="left:1479.9px;top:85.2px;" width="7.2" height="4.2" viewBox="0 0 7.2 4.2"><path d="M0 0H7.2L3.6 4.2Z" fill="#c8c8c8"/></svg>
<div class="t" style="left:1096px;top:104px;height:16px;line-height:16px;font-size:12.5px;color:#c8c8c8;font-weight:normal;">Tag</div>
<div style="left:1121.5px;top:103px;width:164px;height:16.5px;background:#515151;border:1px solid #303030;border-radius:3px;"></div>
<div class="t" style="left:1125.5px;top:104px;height:16px;line-height:16px;font-size:12.5px;color:#d2d2d2;font-weight:normal;">Untagged</div>
<svg style="left:1272.9px;top:109.45px;" width="7.2" height="4.2" viewBox="0 0 7.2 4.2"><path d="M0 0H7.2L3.6 4.2Z" fill="#c8c8c8"/></svg>
<div class="t" style="left:1298px;top:104px;height:16px;line-height:16px;font-size:12.5px;color:#c8c8c8;font-weight:normal;">Layer</div>
<div style="left:1335px;top:103px;width:160px;height:16.5px;background:#515151;border:1px solid #303030;border-radius:3px 0 0 3px;"></div>
<div class="t" style="left:1339px;top:104px;height:16px;line-height:16px;font-size:12.5px;color:#d2d2d2;font-weight:normal;">UI</div>
<svg style="left:1475.9px;top:109.45px;" width="7.2" height="4.2" viewBox="0 0 7.2 4.2"><path d="M0 0H7.2L3.6 4.2Z" fill="#c8c8c8"/></svg>
<div style="left:1053px;top:128px;width:435px;height:1px;background:#1a1a1a;"></div>
<div style="left:1053px;top:129px;width:435px;height:21px;background:#3e3e3e;"></div>
<div style="left:1053px;top:150px;width:435px;height:1px;background:#303030;"></div>
<svg style="left:1059.0px;top:136.0px;" width="9" height="8.2" viewBox="0 0 9 8.2"><path d="M0 0H9L4.5 7.999999999999999Z" fill="#6e6e6e"/></svg>
<svg style="left:1074.5px;top:133.0px;" width="13" height="13" viewBox="0 0 13 13"><g fill="#d8d8d8"><path d="M0.2 3.2L2.9 0.3L5.3 5.4Z"/><path d="M12.6 3.2L9.9 0.3L7.5 5.4Z"/><path d="M0.2 9.8L2.9 12.7L5.3 7.6Z"/><path d="M12.6 9.8L9.9 12.7L7.5 7.6Z"/></g></svg>
<div class="t" style="left:1113.2px;top:132px;height:16px;line-height:16px;font-size:12.5px;color:#e4e4e4;font-weight:normal;-webkit-text-stroke:0.4px #e4e4e4;letter-spacing:0.3px;">Rect Transform</div>
<svg style="left:1434.5px;top:134.0px;" width="11" height="11" viewBox="0 0 11 11"><circle cx="5.5" cy="5.5" r="5" fill="#c8c8c8"/><path d="M3.9 4.3A1.7 1.7 0 1 1 6.4 5.8Q5.5 6.3 5.5 7.1" fill="none" stroke="#3e3e3e" stroke-width="1.3"/><rect x="4.8" y="7.9" width="1.4" height="1.3" fill="#3e3e3e"/></svg>
<svg style="left:1454.5px;top:134.0px;" width="11" height="11" viewBox="0 0 11 11"><g stroke="#c8c8c8" stroke-width="1.2" fill="none"><path d="M0.6 3.4H5.6M8 3.4H10.4M0.6 7.6H2.6M5 7.6H10.4M6.8 0.8V6M3.8 5V10.2"/></g></svg>
<svg style="left:1478.3px;top:135.2px;" width="3" height="9" viewBox="0 0 3 9"><g fill="#c4c4c4"><rect x="0.5" y="0" width="1.9" height="1.9"/><rect x="0.5" y="3.4" width="1.9" height="1.9"/><rect x="0.5" y="6.8" width="1.9" height="1.9"/></g></svg>
<div class="t" style="left:1081px;top:158px;height:16px;line-height:16px;font-size:10.8px;color:#c8c8c8;font-weight:normal;">center</div>
<div class="t" style="left:1068px;top:196.5px;width:0;height:0;"><div class="t" style="left:-30px;top:-8px;width:60px;height:16px;line-height:16px;text-align:center;font-size:10.8px;color:#c8c8c8;transform:rotate(-90deg);">middle</div></div>
<svg style="left:1080px;top:178px;" width="35" height="35" viewBox="0 0 35 35"><rect x="0.5" y="0.5" width="34" height="34" fill="#3a3a3a" stroke="#5a5a5a" stroke-width="1"/><path d="M17.5 1V34M1 17.5H34" stroke="#a04444" stroke-width="1"/><rect x="9.5" y="9.5" width="16" height="16" fill="none" stroke="#a8a8a8" stroke-width="1"/><circle cx="17.5" cy="17.5" r="1.7" fill="#e8a020"/></svg>
<div class="t" style="left:1229.5px;top:158px;height:16px;line-height:16px;font-size:12.5px;color:#c8c8c8;font-weight:normal;">Pos X</div>
<div class="t" style="left:1317.5px;top:158px;height:16px;line-height:16px;font-size:12.5px;color:#c8c8c8;font-weight:normal;">Pos Y</div>
<div class="t" style="left:1404.5px;top:158px;height:16px;line-height:16px;font-size:12.5px;color:#c8c8c8;font-weight:normal;">Pos Z</div>
<div style="left:1228px;top:174.5px;width:86px;height:17.5px;background:#2a2a2a;border:1px solid #212121;border-top-color:#0d0d0d;border-radius:3px;"></div>
<div class="t" style="left:1232px;top:177px;height:16px;line-height:16px;font-size:12.5px;color:#d2d2d2;font-weight:normal;">0</div>
<div style="left:1316px;top:174.5px;width:86px;height:17.5px;background:#2a2a2a;border:1px solid #212121;border-top-color:#0d0d0d;border-radius:3px;"></div>
<div class="t" style="left:1320px;top:177px;height:16px;line-height:16px;font-size:12.5px;color:#d2d2d2;font-weight:normal;">0</div>
<div style="left:1403.5px;top:174.5px;width:90px;height:17.5px;background:#2a2a2a;border:1px solid #212121;border-top-color:#0d0d0d;border-radius:3px 0 0 3px;"></div>
<div class="t" style="left:1407.5px;top:177px;height:16px;line-height:16px;font-size:12.5px;color:#d2d2d2;font-weight:normal;">0</div>
<div class="t" style="left:1229.5px;top:194px;height:16px;line-height:16px;font-size:12.5px;color:#7baef5;font-weight:normal;">Width</div>
<div class="t" style="left:1317.5px;top:194px;height:16px;line-height:16px;font-size:12.5px;color:#c8c8c8;font-weight:normal;">Height</div>
<div style="left:1228px;top:210px;width:86px;height:18px;background:#2a2a2a;border:1px solid #3a79bb;border-top-color:#3a79bb;border-radius:3px;"></div>
<div class="t" style="left:1231.5px;top:212px;height:16px;line-height:16px;font-size:12.5px;color:#d2d2d2;font-weight:normal;">200</div>
<div style="left:1253.5px;top:212.5px;width:1px;height:13px;background:#d8d8d8;"></div>
<div style="left:1316px;top:210px;width:86px;height:17.5px;background:#2a2a2a;border:1px solid #212121;border-top-color:#0d0d0d;border-radius:3px;"></div>
<div class="t" style="left:1320px;top:212px;height:16px;line-height:16px;font-size:12.5px;color:#d2d2d2;font-weight:normal;">600</div>
<div style="left:1438px;top:209px;width:23.5px;height:18px;background:#585858;border-radius:3px 0 0 3px;border:1px solid #303030;border-right:none;"></div>
<div style="left:1462px;top:209px;width:30px;height:18px;background:#585858;border:1px solid #303030;border-right:none;"></div>
<svg style="left:1444px;top:212.5px;" width="11" height="11" viewBox="0 0 11 11"><rect x="1" y="1" width="9" height="9" fill="none" stroke="#9a9a9a" stroke-width="1.1" stroke-dasharray="2.2 1.6"/></svg>
<div class="t" style="left:1469.5px;top:210px;height:16px;line-height:16px;font-size:11.5px;color:#9a9a9a;font-weight:normal;">R</div>
<svg style="left:1059.0px;top:236.4px;" width="9" height="8.2" viewBox="0 0 9 8.2"><path d="M0 0H9L4.5 7.999999999999999Z" fill="#6e6e6e"/></svg>
<div class="t" style="left:1072.5px;top:232px;height:16px;line-height:16px;font-size:12.5px;color:#c8c8c8;font-weight:normal;">Anchors</div>
<div class="t" style="left:1087.5px;top:250px;height:16px;line-height:16px;font-size:12.5px;color:#c8c8c8;font-weight:normal;">Min</div>
<div class="t" style="left:1229px;top:250px;height:16px;line-height:16px;font-size:12.5px;color:#c8c8c8;font-weight:normal;">X</div>
<div style="left:1240px;top:248.0px;width:74px;height:17.5px;background:#2a2a2a;border:1px solid #212121;border-top-color:#0d0d0d;border-radius:3px;"></div>
<div class="t" style="left:1244px;top:250px;height:16px;line-height:16px;font-size:12.5px;color:#d2d2d2;font-weight:normal;">0.5</div>
<div class="t" style="left:1317.5px;top:250px;height:16px;line-height:16px;font-size:12.5px;color:#c8c8c8;font-weight:normal;">Y</div>
<div style="left:1328.5px;top:248.0px;width:73px;height:17.5px;background:#2a2a2a;border:1px solid #212121;border-top-color:#0d0d0d;border-radius:3px;"></div>
<div class="t" style="left:1332.5px;top:250px;height:16px;line-height:16px;font-size:12.5px;color:#d2d2d2;font-weight:normal;">0.5</div>
<div class="t" style="left:1087.5px;top:270px;height:16px;line-height:16px;font-size:12.5px;color:#c8c8c8;font-weight:normal;">Max</div>
<div class="t" style="left:1229px;top:270px;height:16px;line-height:16px;font-size:12.5px;color:#c8c8c8;font-weight:normal;">X</div>
<div style="left:1240px;top:268.0px;width:74px;height:17.5px;background:#2a2a2a;border:1px solid #212121;border-top-color:#0d0d0d;border-radius:3px;"></div>
<div class="t" style="left:1244px;top:270px;height:16px;line-height:16px;font-size:12.5px;color:#d2d2d2;font-weight:normal;">0.5</div>
<div class="t" style="left:1317.5px;top:270px;height:16px;line-height:16px;font-size:12.5px;color:#c8c8c8;font-weight:normal;">Y</div>
<div style="left:1328.5px;top:268.0px;width:73px;height:17.5px;background:#2a2a2a;border:1px solid #212121;border-top-color:#0d0d0d;border-radius:3px;"></div>
<div class="t" style="left:1332.5px;top:270px;height:16px;line-height:16px;font-size:12.5px;color:#d2d2d2;font-weight:normal;">0.5</div>
<div class="t" style="left:1072.5px;top:292px;height:16px;line-height:16px;font-size:12.5px;color:#c8c8c8;font-weight:normal;">Pivot</div>
<div class="t" style="left:1229px;top:292px;height:16px;line-height:16px;font-size:12.5px;color:#c8c8c8;font-weight:normal;">X</div>
<div style="left:1240px;top:290.0px;width:74px;height:17.5px;background:#2a2a2a;border:1px solid #212121;border-top-color:#0d0d0d;border-radius:3px;"></div>
<div class="t" style="left:1244px;top:292px;height:16px;line-height:16px;font-size:12.5px;color:#d2d2d2;font-weight:normal;">0.5</div>
<div class="t" style="left:1317.5px;top:292px;height:16px;line-height:16px;font-size:12.5px;color:#c8c8c8;font-weight:normal;">Y</div>
<div style="left:1328.5px;top:290.0px;width:73px;height:17.5px;background:#2a2a2a;border:1px solid #212121;border-top-color:#0d0d0d;border-radius:3px;"></div>
<div class="t" style="left:1332.5px;top:292px;height:16px;line-height:16px;font-size:12.5px;color:#d2d2d2;font-weight:normal;">0.5</div>
<div class="t" style="left:1072.5px;top:320px;height:16px;line-height:16px;font-size:12.5px;color:#c8c8c8;font-weight:normal;">Rotation</div>
<div class="t" style="left:1232.5px;top:320px;height:16px;line-height:16px;font-size:12.5px;color:#c8c8c8;font-weight:normal;">X</div>
<div style="left:1243.5px;top:318.0px;width:70px;height:17.5px;background:#2a2a2a;border:1px solid #212121;border-top-color:#0d0d0d;border-radius:3px;"></div>
<div class="t" style="left:1247.5px;top:320px;height:16px;line-height:16px;font-size:12.5px;color:#d2d2d2;font-weight:normal;">0</div>
<div class="t" style="left:1319.8px;top:320px;height:16px;line-height:16px;font-size:12.5px;color:#c8c8c8;font-weight:normal;">Y</div>
<div style="left:1330.5px;top:318.0px;width:70.5px;height:17.5px;background:#2a2a2a;border:1px solid #212121;border-top-color:#0d0d0d;border-radius:3px;"></div>
<div class="t" style="left:1334.5px;top:320px;height:16px;line-height:16px;font-size:12.5px;color:#d2d2d2;font-weight:normal;">0</div>
<div class="t" style="left:1407.5px;top:320px;height:16px;line-height:16px;font-size:12.5px;color:#c8c8c8;font-weight:normal;">Z</div>
<div style="left:1418.5px;top:318.0px;width:76px;height:17.5px;background:#2a2a2a;border:1px solid #212121;border-top-color:#0d0d0d;border-radius:3px 0 0 3px;"></div>
<div class="t" style="left:1422.5px;top:320px;height:16px;line-height:16px;font-size:12.5px;color:#d2d2d2;font-weight:normal;">0</div>
<div class="t" style="left:1072.5px;top:340px;height:16px;line-height:16px;font-size:12.5px;color:#c8c8c8;font-weight:normal;">Scale</div>
<div class="t" style="left:1232.5px;top:340px;height:16px;line-height:16px;font-size:12.5px;color:#c8c8c8;font-weight:normal;">X</div>
<div style="left:1243.5px;top:338.0px;width:70px;height:17.5px;background:#2a2a2a;border:1px solid #212121;border-top-color:#0d0d0d;border-radius:3px;"></div>
<div class="t" style="left:1247.5px;top:340px;height:16px;line-height:16px;font-size:12.5px;color:#d2d2d2;font-weight:normal;">1</div>
<div class="t" style="left:1319.8px;top:340px;height:16px;line-height:16px;font-size:12.5px;color:#c8c8c8;font-weight:normal;">Y</div>
<div style="left:1330.5px;top:338.0px;width:70.5px;height:17.5px;background:#2a2a2a;border:1px solid #212121;border-top-color:#0d0d0d;border-radius:3px;"></div>
<div class="t" style="left:1334.5px;top:340px;height:16px;line-height:16px;font-size:12.5px;color:#d2d2d2;font-weight:normal;">1</div>
<div class="t" style="left:1407.5px;top:340px;height:16px;line-height:16px;font-size:12.5px;color:#c8c8c8;font-weight:normal;">Z</div>
<div style="left:1418.5px;top:338.0px;width:76px;height:17.5px;background:#2a2a2a;border:1px solid #212121;border-top-color:#0d0d0d;border-radius:3px 0 0 3px;"></div>
<div class="t" style="left:1422.5px;top:340px;height:16px;line-height:16px;font-size:12.5px;color:#d2d2d2;font-weight:normal;">1</div>
<div style="left:1053px;top:363px;width:435px;height:1px;background:#1a1a1a;"></div>
<div style="left:1053px;top:364px;width:435px;height:21px;background:#3e3e3e;"></div>
<div style="left:1053px;top:385px;width:435px;height:1px;background:#303030;"></div>
<svg style="left:1059.0px;top:371.0px;" width="9" height="8.2" viewBox="0 0 9 8.2"><path d="M0 0H9L4.5 7.999999999999999Z" fill="#6e6e6e"/></svg>
<svg style="left:1072.5px;top:367.5px;" width="17" height="13" viewBox="0 0 17 13"><path d="M0.9 6.3Q8.5 -3.6 16.1 6.3Q8.5 16.2 0.9 6.3Z" fill="none" stroke="#e4e4e4" stroke-width="1.25"/><circle cx="8.5" cy="6.2" r="2.5" fill="none" stroke="#e4e4e4" stroke-width="1.5"/></svg>
<div class="t" style="left:1113.2px;top:367px;height:16px;line-height:16px;font-size:12.5px;color:#e4e4e4;font-weight:normal;-webkit-text-stroke:0.4px #e4e4e4;letter-spacing:0.3px;">Canvas Renderer</div>
<svg style="left:1434.5px;top:369.0px;" width="11" height="11" viewBox="0 0 11 11"><circle cx="5.5" cy="5.5" r="5" fill="#c8c8c8"/><path d="M3.9 4.3A1.7 1.7 0 1 1 6.4 5.8Q5.5 6.3 5.5 7.1" fill="none" stroke="#3e3e3e" stroke-width="1.3"/><rect x="4.8" y="7.9" width="1.4" height="1.3" fill="#3e3e3e"/></svg>
<svg style="left:1454.5px;top:369.0px;" width="11" height="11" viewBox="0 0 11 11"><g stroke="#c8c8c8" stroke-width="1.2" fill="none"><path d="M0.6 3.4H5.6M8 3.4H10.4M0.6 7.6H2.6M5 7.6H10.4M6.8 0.8V6M3.8 5V10.2"/></g></svg>
<svg style="left:1478.3px;top:370.2px;" width="3" height="9" viewBox="0 0 3 9"><g fill="#c4c4c4"><rect x="0.5" y="0" width="1.9" height="1.9"/><rect x="0.5" y="3.4" width="1.9" height="1.9"/><rect x="0.5" y="6.8" width="1.9" height="1.9"/></g></svg>
<div class="t" style="left:1072.5px;top:391px;height:16px;line-height:16px;font-size:12.5px;color:#c8c8c8;font-weight:normal;">Cull Transparent Mesh</div>
<div style="left:1231px;top:391px;width:14px;height:14px;background:#2a2a2a;border:1px solid #1c1c1c;border-radius:2px;"></div>
<div style="left:1053px;top:414px;width:435px;height:1px;background:#1a1a1a;"></div>
<div style="left:1053px;top:415px;width:435px;height:20px;background:#3e3e3e;"></div>
<div style="left:1053px;top:435px;width:435px;height:1px;background:#303030;"></div>
<svg style="left:1059.0px;top:421.5px;" width="9" height="8.2" viewBox="0 0 9 8.2"><path d="M0 0H9L4.5 7.999999999999999Z" fill="#6e6e6e"/></svg>
<svg style="left:1074px;top:418.5px;" width="14" height="13" viewBox="0 0 14 13"><rect x="1.6" y="1.6" width="10.8" height="9.6" fill="none" stroke="#d0d0d0" stroke-width="1"/><g fill="#dcdcdc"><rect x="0" y="0.1" width="2.9" height="2.9" rx="0.8"/><rect x="11.1" y="0.1" width="2.9" height="2.9" rx="0.8"/><rect x="0" y="9.9" width="2.9" height="2.9" rx="0.8"/><rect x="11.1" y="9.9" width="2.9" height="2.9" rx="0.8"/><path d="M3 9.6V8.2L5.6 6.4L7.2 7.6L8.8 5.6Q10.4 5.6 11 7.2V9.6Z"/><circle cx="4.9" cy="4.4" r="1.2"/></g></svg>
<div style="left:1093.2px;top:418.2px;width:13.8px;height:13.6px;background:#2a2a2a;border:1px solid #1c1c1c;border-radius:2px;"></div>
<svg style="left:1093.2px;top:418.2px;" width="13.8" height="13.6" viewBox="0 0 13.8 13.6"><path d="M3.2 7.4L5.8 10L11 4" fill="none" stroke="#e6e6e6" stroke-width="1.6"/></svg>
<div class="t" style="left:1113.2px;top:418px;height:16px;line-height:16px;font-size:12.5px;color:#e4e4e4;font-weight:normal;-webkit-text-stroke:0.4px #e4e4e4;letter-spacing:0.3px;">Image</div>
<svg style="left:1434.5px;top:419.5px;" width="11" height="11" viewBox="0 0 11 11"><circle cx="5.5" cy="5.5" r="5" fill="#c8c8c8"/><path d="M3.9 4.3A1.7 1.7 0 1 1 6.4 5.8Q5.5 6.3 5.5 7.1" fill="none" stroke="#3e3e3e" stroke-width="1.3"/><rect x="4.8" y="7.9" width="1.4" height="1.3" fill="#3e3e3e"/></svg>
<svg style="left:1454.5px;top:419.5px;" width="11" height="11" viewBox="0 0 11 11"><g stroke="#c8c8c8" stroke-width="1.2" fill="none"><path d="M0.6 3.4H5.6M8 3.4H10.4M0.6 7.6H2.6M5 7.6H10.4M6.8 0.8V6M3.8 5V10.2"/></g></svg>
<svg style="left:1478.3px;top:420.7px;" width="3" height="9" viewBox="0 0 3 9"><g fill="#c4c4c4"><rect x="0.5" y="0" width="1.9" height="1.9"/><rect x="0.5" y="3.4" width="1.9" height="1.9"/><rect x="0.5" y="6.8" width="1.9" height="1.9"/></g></svg>
<div class="t" style="left:1072.5px;top:442px;height:16px;line-height:16px;font-size:12.5px;color:#c8c8c8;font-weight:normal;">Source Image</div>
<div style="left:1231px;top:440.5px;width:262px;height:17.5px;background:#2a2a2a;border:1px solid #212121;border-top-color:#0d0d0d;border-radius:3px 0 0 3px;"></div>
<div class="t" style="left:1234.5px;top:442px;height:16px;line-height:16px;font-size:12.5px;color:#d2d2d2;font-weight:normal;">None (Sprite)</div>
<div style="left:1475px;top:441px;width:13px;height:15.5px;background:#3a3a3a;"></div>
<svg style="left:1478px;top:443px;" width="10" height="12" viewBox="0 0 10 12"><circle cx="5.8" cy="5.7" r="4.7" fill="none" stroke="#d0d0d0" stroke-width="1.1"/><circle cx="5.8" cy="5.7" r="1.8" fill="#d0d0d0"/></svg>
<div class="t" style="left:1072.5px;top:462px;height:16px;line-height:16px;font-size:12.5px;color:#c8c8c8;font-weight:normal;">Color</div>
<div style="left:1231px;top:460px;width:240px;height:18px;background:#242424;"></div>
<div style="left:1231.5px;top:461px;width:238.7px;height:12.6px;background:#868484;"></div>
<div style="left:1231.5px;top:473.6px;width:238.7px;height:3.5px;background:#ffffff;"></div>
<svg style="left:1473px;top:461px;" width="15" height="15" viewBox="0 0 15 15"><g stroke="#d4d4d4" fill="none"><path d="M3.4 11.8L8.8 6.4" stroke-width="3.3" stroke-linecap="round"/><path d="M7.2 3L11.8 7.6" stroke-width="1.7" stroke-linecap="round"/><path d="M10 5L12.2 2.8" stroke-width="2.9" stroke-linecap="round"/></g><path d="M1.6 13.8L2 10.8L4.8 13.4Z" fill="#d4d4d4"/><path d="M5 10.8L7 8.8" stroke="#3a3a3a" stroke-width="1"/></svg>
<div class="t" style="left:1072.5px;top:482px;height:16px;line-height:16px;font-size:12.5px;color:#c8c8c8;font-weight:normal;">Material</div>
<div style="left:1231px;top:480.5px;width:262px;height:17.5px;background:#2a2a2a;border:1px solid #212121;border-top-color:#0d0d0d;border-radius:3px 0 0 3px;"></div>
<div class="t" style="left:1234.5px;top:482px;height:16px;line-height:16px;font-size:12.5px;color:#d2d2d2;font-weight:normal;">None (Material)</div>
<div style="left:1475px;top:481px;width:13px;height:15.5px;background:#3a3a3a;"></div>
<svg style="left:1478px;top:483px;" width="10" height="12" viewBox="0 0 10 12"><circle cx="5.8" cy="5.7" r="4.7" fill="none" stroke="#d0d0d0" stroke-width="1.1"/><circle cx="5.8" cy="5.7" r="1.8" fill="#d0d0d0"/></svg>
<div class="t" style="left:1072.5px;top:502px;height:16px;line-height:16px;font-size:12.5px;color:#c8c8c8;font-weight:normal;">Raycast Target</div>
<div style="left:1231px;top:502px;width:14px;height:14px;background:#2a2a2a;border:1px solid #1c1c1c;border-radius:2px;"></div>
<svg style="left:1231px;top:502px;" width="14" height="14" viewBox="0 0 14 14"><path d="M3.2 7.4L5.8 10L11 4" fill="none" stroke="#e6e6e6" stroke-width="1.6"/></svg>
<div class="t" style="left:1072.5px;top:522px;height:16px;line-height:16px;font-size:12.5px;color:#c8c8c8;font-weight:normal;">Maskable</div>
<div style="left:1231px;top:522px;width:14px;height:14px;background:#2a2a2a;border:1px solid #1c1c1c;border-radius:2px;"></div>
<svg style="left:1231px;top:522px;" width="14" height="14" viewBox="0 0 14 14"><path d="M3.2 7.4L5.8 10L11 4" fill="none" stroke="#e6e6e6" stroke-width="1.6"/></svg>
<div style="left:1053px;top:544px;width:435px;height:1px;background:#1a1a1a;"></div>
<div style="left:1053px;top:545px;width:435px;height:54px;background:#3e3e3e;"></div>
<div style="left:1053px;top:599px;width:435px;height:1px;background:#1a1a1a;"></div>
<div style="left:1053px;top:608px;width:435px;height:1px;background:#1a1a1a;"></div>
<div style="left:1073px;top:555px;width:24px;height:24px;background:#ffffff;"></div>
<div class="t" style="left:1108.8px;top:552px;height:16px;line-height:16px;font-size:14px;color:#bdbdbd;font-weight:normal;">Default UI Material</div>
<svg style="left:1463px;top:553px;" width="11" height="11" viewBox="0 0 11 11"><circle cx="5.5" cy="5.5" r="5" fill="#c8c8c8"/><path d="M3.9 4.3A1.7 1.7 0 1 1 6.4 5.8Q5.5 6.3 5.5 7.1" fill="none" stroke="#3e3e3e" stroke-width="1.3"/><rect x="4.8" y="7.9" width="1.4" height="1.3" fill="#3e3e3e"/></svg>
<svg style="left:1479px;top:552.5px;" width="12" height="12" viewBox="0 0 12 12"><circle cx="6" cy="6" r="3.3" fill="none" stroke="#c8c8c8" stroke-width="2.2"/><g stroke="#c8c8c8" stroke-width="2"><path d="M6 0.4V2.4M6 9.6V11.6M0.4 6H2.4M9.6 6H11.6M2 2L3.4 3.4M8.6 8.6L10 10M2 10L3.4 8.6M8.6 3.4L10 2"/></g></svg>
<div class="t" style="left:1106px;top:575px;height:16px;line-height:16px;font-size:12.5px;color:#8c8c8c;font-weight:normal;">Shader</div>
<div style="left:1158px;top:574px;width:335px;height:16px;background:#474747;border-radius:3px 0 0 3px;"></div>
<div class="t" style="left:1161.5px;top:574px;height:16px;line-height:16px;font-size:12.5px;color:#9a9a9a;font-weight:normal;">UI/Default</div>
<svg style="left:1474.9px;top:580.1px;" width="7.2" height="4.2" viewBox="0 0 7.2 4.2"><path d="M0 0H7.2L3.6 4.2Z" fill="#7e7e7e"/></svg>
<svg style="left:1059.6px;top:583.9px;" width="8" height="9" viewBox="0 0 8 9"><path d="M0 0V9L7.8 4.5Z" fill="#6e6e6e"/></svg>
<div style="left:1159px;top:618px;width:228px;height:22.5px;background:#585858;border:1px solid #2e2e2e;border-radius:3px;"></div>
<div class="t" style="left:1159px;top:618px;width:228px;height:22px;line-height:23px;text-align:center;font-size:12.5px;color:#e0e0e0;">Add Component</div>
<svg style="left:892px;top:10px;" width="17" height="24" viewBox="0 0 17 24"><path d="M2.4 2.1V18.6L6.2 15.2L8.9 21.4L11.6 20.2L8.9 14.2H13.8Z" fill="#ffffff" stroke="#000000" stroke-width="1" stroke-linejoin="round"/></svg></body></html>
